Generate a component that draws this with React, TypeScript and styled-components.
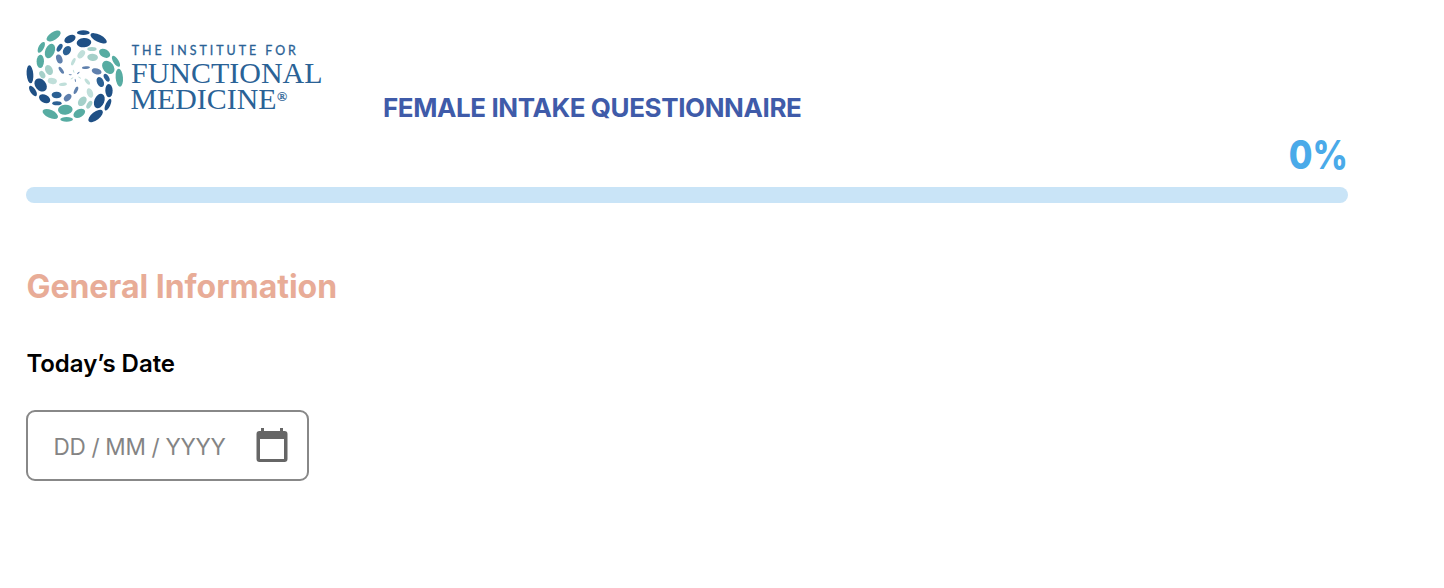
import React from "react";
import styled, { createGlobalStyle } from "styled-components";

const GlobalStyle = createGlobalStyle`
  body { margin: 0; background: #fff; font-family: Inter, "Liberation Sans", sans-serif; }
`;

const Page = styled.main`
  box-sizing: border-box;
  width: 1348.4px;
  padding: 26px 0 0 26.4px;
`;

const Header = styled.header`
  display: flex;
  align-items: flex-start;
  height: 100px;
`;

const Logo = styled.svg`
  flex: none;
  display: block;
  width: 300px;
  height: 100px;
  margin-left: -2.4px;
`;

const FormTitle = styled.h1`
  margin: 65px 0 0 59px;
  font-size: 26px;
  line-height: 34px;
  font-weight: 700;
  letter-spacing: -0.41px;
  color: #3f5ba9;
  white-space: nowrap;
`;

const Progress = styled.section`
  display: flex;
  flex-direction: column;
  align-items: flex-end;
  padding-top: 5px;
`;

const Percent = styled.span`
  font-size: 39.5px;
  line-height: 48px;
  font-weight: 800;
  color: #4aaae9;
  transform: scaleX(0.87);
  transform-origin: right center;
`;

const Track = styled.div`
  width: 100%;
  height: 16px;
  margin-top: 8px;
  border-radius: 8px;
  background: #c9e4f7;
`;

const SectionTitle = styled.h2`
  margin: 63px 0 0;
  font-size: 32px;
  line-height: 41px;
  font-weight: 700;
  letter-spacing: -0.02px;
  color: #e8ac97;
`;

const Label = styled.label`
  display: block;
  margin-top: 42px;
  font-size: 24px;
  line-height: 30px;
  font-weight: 600;
  letter-spacing: -0.05px;
  color: #000;
`;

const DateField = styled.div`
  box-sizing: border-box;
  display: flex;
  align-items: center;
  justify-content: space-between;
  width: 283px;
  height: 71px;
  margin: 31px 0 0 -0.4px;
  padding: 0 19px 0 25.5px;
  border: 2px solid #888;
  border-radius: 9px;
`;

const Placeholder = styled.span`
  padding-top: 2px;
  font-size: 22.6px;
  line-height: 30px;
  font-weight: 400;
  letter-spacing: -0.32px;
  color: #848484;
  white-space: nowrap;
`;

const CalendarIcon = styled.svg`
  display: block;
  width: 32px;
  height: 36px;
  margin-bottom: 2px;
`;

const NAVY = "#1f5085";
const BLUE = "#2b6093";
const SLATE = "#5f80ad";
const TEAL = "#57aca2";
const MINT = "#a5d0c9";
const PALE = "#c0dfda";

type Petal = [number, number, number, number, number, string];

// centre x, centre y, long radius, short radius, rotation, colour
const petals: Petal[] = [
  [88, 30, 24, 12, -33, TEAL],
  [177, 20, 19, 7, 0, NAVY],
  [137, 39, 18, 11, -27, NAVY],
  [179, 50, 22, 14, -5, NAVY],
  [223, 37, 27, 11, 27, NAVY],
  [51, 64, 18, 8, -62, TEAL],
  [77, 75, 23, 14, -68, TEAL],
  [106, 65, 13, 7, -60, BLUE],
  [128, 74, 15, 11, -55, BLUE],
  [203, 69, 14, 6, 0, MINT],
  [171, 85, 14, 9, -50, PALE],
  [205, 94, 16, 11, 5, MINT],
  [241, 82, 18, 12, 30, TEAL],
  [275, 106, 19, 8, 57, TEAL],
  [252, 124, 22, 16, 50, TEAL],
  [48, 106, 20, 11, -88, TEAL],
  [105, 99, 14, 9, 70, SLATE],
  [147, 107, 12, 5, -65, PALE],
  [111, 133, 12, 5, 55, SLATE],
  [185, 125, 12, 4, -5, SLATE],
  [217, 136, 15, 9, 15, SLATE],
  [247, 155, 13, 7, 60, BLUE],
  [228, 168, 16, 10, 65, BLUE],
  [285, 155, 27, 11, 85, TEAL],
  [254, 194, 20, 11, 88, NAVY],
  [251, 236, 19, 7, -65, NAVY],
  [225, 225, 23, 15, -68, NAVY],
  [214, 270, 26, 12, -38, NAVY],
  [189, 167, 11, 5, 50, PALE],
  [197, 201, 15, 9, 70, PALE],
  [174, 226, 16, 11, -50, MINT],
  [195, 236, 13, 7, -60, MINT],
  [155, 193, 12, 5, -65, SLATE],
  [130, 215, 13, 9, -45, SLATE],
  [116, 175, 12, 5, -5, PALE],
  [84, 165, 14, 9, 10, PALE],
  [54, 146, 12, 8, 60, MINT],
  [74, 132, 16, 11, 65, MINT],
  [17, 145, 27, 10, 85, NAVY],
  [49, 177, 22, 16, 50, NAVY],
  [26, 195, 18, 8, 57, NAVY],
  [61, 218, 18, 12, 28, NAVY],
  [97, 207, 15, 10, 3, BLUE],
  [98, 232, 14, 6, 0, BLUE],
  [78, 264, 25, 12, 25, TEAL],
  [123, 251, 22, 15, -5, TEAL],
  [165, 262, 19, 12, -30, TEAL],
  [127, 280, 19, 7, 0, TEAL],
  [138, 146, 5, 1.5, 5, SLATE],
  [148, 136, 5, 1.5, 70, PALE],
  [162, 141, 5, 1.5, -40, SLATE],
  [153, 163, 5, 1.5, 80, SLATE],
  [166, 155, 5, 1.5, 35, PALE],
  [143, 157, 5, 1.5, -35, PALE],
];

function InstituteLogo() {
  return (
    <Logo viewBox="24 26 300 100" role="img" aria-label="The Institute for Functional Medicine">
      <g transform="translate(24.3 26) scale(0.33333)">
        {petals.map(([cx, cy, rx, ry, angle, fill], i) => (
          <ellipse
            key={i}
            cx={cx}
            cy={cy}
            rx={rx}
            ry={ry}
            fill={fill}
            transform={`rotate(${angle} ${cx} ${cy})`}
          />
        ))}
      </g>
      <g fill="#2a6296">
        <text x="131.8" y="55" fontFamily="Lato, sans-serif" fontSize="12.4" stroke="#2a6296" strokeWidth="0.3" textLength="164" lengthAdjust="spacing">
          THE INSTITUTE FOR
        </text>
        <g fontFamily="'Liberation Serif', serif">
          <text x="131" y="82.6" fontSize="29" textLength="191.5" lengthAdjust="spacingAndGlyphs">FUNCTIONAL</text>
          <text x="130.5" y="109.3" fontSize="28.5" textLength="146" lengthAdjust="spacingAndGlyphs">MEDICINE</text>
          <text x="277" y="101" fontSize="13.5" stroke="#2a6296" strokeWidth="0.2">®</text>
        </g>
      </g>
    </Logo>
  );
}

export default function App() {
  return (
    <>
      <GlobalStyle />
      <Page>
        <Header>
          <InstituteLogo />
          <FormTitle>FEMALE INTAKE QUESTIONNAIRE</FormTitle>
        </Header>
        <Progress>
          <Percent>0%</Percent>
          <Track />
        </Progress>
        <SectionTitle>General Information</SectionTitle>
        <Label>Today’s Date</Label>
        <DateField>
          <Placeholder>DD / MM / YYYY</Placeholder>
          <CalendarIcon viewBox="0 0 32 36">
            <path
              fill="#666"
              fillRule="evenodd"
              d="M5 1h3v3h16V1h3v3h1.5a3 3 0 0 1 3 3v25a3 3 0 0 1-3 3h-25a3 3 0 0 1-3-3V7a3 3 0 0 1 3-3H5zM4 12v20h24V12z"
            />
          </CalendarIcon>
        </DateField>
      </Page>
    </>
  );
}
